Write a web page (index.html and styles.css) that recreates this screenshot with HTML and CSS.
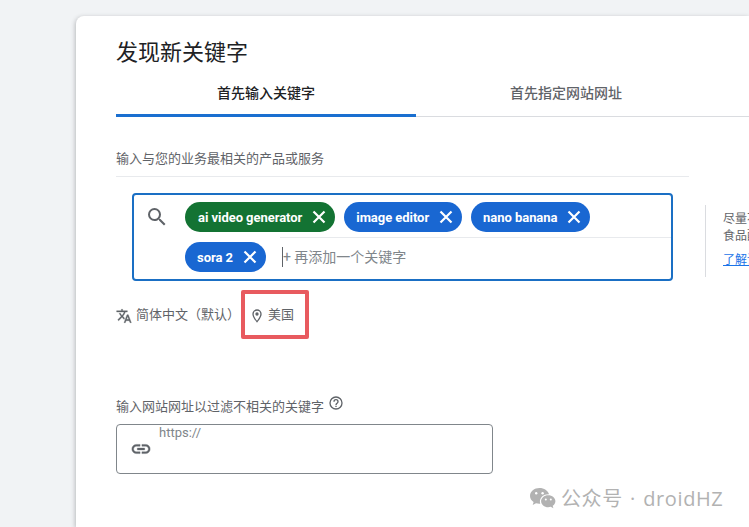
FILE: index.html
```html
<!DOCTYPE html>
<html lang="zh-CN">
<head>
    <meta charset="UTF-8">
    <title>发现新关键字</title>
    <link rel="stylesheet" href="styles.css">
</head>
<body>
    <div class="card">
        <h1 class="title">发现新关键字</h1>
        <div class="tabs">
            <div class="tab active">首先输入关键字</div>
            <div class="tab">首先指定网站网址</div>
        </div>
        <p class="section-label">输入与您的业务最相关的产品或服务</p>
        <div class="keyword-row">
            <div class="keyword-box">
                <svg class="search-icon" viewBox="0 0 24 24"><path d="M15.5 14h-.79l-.28-.27A6.47 6.47 0 0 0 16 9.5 6.5 6.5 0 1 0 9.5 16c1.61 0 3.09-.59 4.23-1.57l.27.28v.79l5 4.99L20.49 19l-4.99-5zm-6 0C7.01 14 5 11.99 5 9.5S7.01 5 9.5 5 14 7.01 14 9.5 11.99 14 9.5 14z"/></svg>
                <div class="chip-area">
                    <div class="chip-line first">
                        <span class="chip green">ai video generator<svg viewBox="0 0 14 14"><path d="M1.500 1.500l11 11M12.500 1.500l-11 11"/></svg></span>
                        <span class="chip">image editor<svg viewBox="0 0 14 14"><path d="M1.500 1.500l11 11M12.500 1.500l-11 11"/></svg></span>
                        <span class="chip">nano banana<svg viewBox="0 0 14 14"><path d="M1.500 1.500l11 11M12.500 1.500l-11 11"/></svg></span>
                    </div>
                    <div class="chip-line">
                        <span class="chip">sora 2<svg viewBox="0 0 14 14"><path d="M1.500 1.500l11 11M12.500 1.500l-11 11"/></svg></span>
                        <span class="add-input">+ 再添加一个关键字</span>
                    </div>
                </div>
            </div>
            <div class="hint">
                <p>尽量不要输入过于宽泛的字词</p>
                <p>食品配送服务等更具体的字词</p>
                <a href="#">了解详情</a>
            </div>
        </div>
        <div class="settings">
            <svg class="lang-icon" viewBox="0 0 24 24"><path d="M12.87 15.07l-2.54-2.51.03-.03A17.52 17.52 0 0 0 14.07 6H17V4h-7V2H8v2H1v1.99h11.17C11.5 7.92 10.44 9.75 9 11.35 8.07 10.32 7.3 9.19 6.69 8h-2c.73 1.63 1.73 3.17 2.98 4.56l-5.09 5.02L4 19l5-5 3.11 3.11.76-2.04zM18.5 10h-2L12 22h2l1.12-3h4.75L21 22h2l-4.5-12zm-2.62 7l1.62-4.33L19.12 17h-3.24z"/></svg>
            <span class="lang-text">简体中文（默认）</span>
            <div class="location-mark">
                <svg class="pin-icon" viewBox="0 0 24 24"><path d="M12 2a7 7 0 0 0-7 7c0 5.25 7 13 7 13s7-7.75 7-13a7 7 0 0 0-7-7zm0 17c-2-2.6-5-6.9-5-10a5 5 0 0 1 10 0c0 3.1-3 7.4-5 10z"/><circle cx="12" cy="9" r="2.5"/></svg>
                <span>美国</span>
            </div>
        </div>
        <div class="url-label">
            <span>输入网站网址以过滤不相关的关键字</span>
            <svg class="help-icon" viewBox="0 0 24 24"><path d="M11 18h2v-2h-2v2zm1-16a10 10 0 1 0 0 20 10 10 0 0 0 0-20zm0 18a8 8 0 1 1 0-16 8 8 0 0 1 0 16zm0-14a4 4 0 0 0-4 4h2a2 2 0 0 1 4 0c0 2-3 1.75-3 5h2c0-2.25 3-2.5 3-5a4 4 0 0 0-4-4z"/></svg>
        </div>
        <div class="url-box">
            <svg class="link-icon" viewBox="0 0 24 24"><path d="M3.9 12c0-1.71 1.39-3.1 3.1-3.1h4V7H7a5 5 0 0 0 0 10h4v-1.9H7c-1.71 0-3.1-1.39-3.1-3.1zM8 13h8v-2H8v2zm9-6h-4v1.9h4c1.71 0 3.1 1.39 3.1 3.1s-1.39 3.1-3.1 3.1h-4V17h4a5 5 0 0 0 0-10z"/></svg>
            <span class="url-placeholder">https://</span>
        </div>
    </div>
    <div class="watermark">
        <svg viewBox="0 0 28 24"><path d="M10.5 2C5.3 2 1 5.5 1 9.9c0 2.5 1.4 4.6 3.6 6.100L3.700 19l3.300-1.700c1.100.3 2.200.5 3.400.5h.9c-.3-.8-.4-1.600-.4-2.400 0-4 3.700-7.200 8.300-7.200h.9C18.900 4.600 15.100 2 10.500 2z"/><path d="M19.200 9.200c-3.900 0-7.100 2.700-7.100 6s3.200 6 7.100 6c.8 0 1.700-.1 2.500-.4l2.700 1.500-.7-2.500c1.700-1.100 2.700-2.800 2.700-4.600 0-3.300-3.200-6-7.200-6z"/><g fill="#fff"><circle cx="7.200" cy="7.300" r="1.200"/><circle cx="13.600" cy="7.300" r="1.200"/><circle cx="16.800" cy="13.600" r="1"/><circle cx="21.800" cy="13.600" r="1"/></g></svg>
        <span>公众号 · droidHZ</span>
    </div>
</body>
</html>
```

FILE: styles.css
```css
*{
    padding: 0;
    margin: 0;
    box-sizing: border-box;
}
html, body{
    height: 100%;
    overflow: hidden;
}
body{
    position: relative;
    font-family: Roboto, 'Noto Sans CJK SC', sans-serif;
    background-color: #f1f3f5;
    padding: 16px 0 0 76px;
}
.card{
    height: 100%;
    padding: 21px 0 0 40px;
    background-color: #fff;
    border-radius: 8px 0 0 0;
    box-shadow: -1px 1px 4px rgba(60, 64, 67, 0.3);
}
.title{
    font-size: 22px;
    font-weight: 400;
    line-height: 32px;
    color: #202124;
}
.tabs{
    display: flex;
    height: 48px;
    border-bottom: 1px solid #dadce0;
}
.tab{
    width: 300px;
    height: 48px;
    line-height: 48px;
    text-align: center;
    font-size: 14px;
    font-weight: 500;
    color: #5f6368;
}
.tab.active{
    color: #202124;
    border-bottom: 3px solid #1a6fd0;
}
.section-label{
    width: 573px;
    margin-top: 31px;
    padding-bottom: 8px;
    height: 29px;
    font-size: 13px;
    line-height: 21px;
    color: #5f6368;
    border-bottom: 1px solid #e8eaed;
}
.keyword-row{
    display: flex;
    align-items: flex-start;
    margin: 16px 0 0 16px;
}
.keyword-box{
    display: flex;
    flex-shrink: 0;
    width: 541px;
    height: 88px;
    border: 2px solid #1a6fc4;
    border-radius: 4px;
}
.search-icon{
    width: 24px;
    height: 24px;
    margin: 10px 0 0 11px;
    fill: #5f6368;
}
.chip-area{
    margin-left: 16px;
    flex: 1;
}
.chip-line{
    display: flex;
    align-items: center;
    gap: 9px;
    height: 38px;
    padding: 4px 0;
}
.chip-line.first{
    position: relative;
    height: 43px;
    padding: 7px 0 6px;
}
.chip-line.first::after{
    content: '';
    position: absolute;
    left: 95px;
    right: 0;
    bottom: 0;
    height: 1px;
    background-color: #e8eaed;
}
.chip{
    display: inline-flex;
    align-items: center;
    height: 30px;
    padding: 0 9px 0 12px;
    border-radius: 15px;
    background-color: #1967d2;
    color: #fff;
    font-size: 13px;
    font-weight: 700;
    letter-spacing: -0.05px;
    white-space: nowrap;
}
.chip.green{
    padding-left: 13px;
    background-color: #137333;
}
.chip svg{
    width: 14px;
    height: 14px;
    margin-left: 10px;
    fill: none;
    stroke: #fff;
    stroke-width: 2.2;
}
.add-input{
    margin-left: 7px;
    border-left: 1px solid #5f6368;
    font-size: 14px;
    line-height: 20px;
    color: #80868b;
}
.hint{
    flex: 1;
    min-width: 0;
    height: 72px;
    margin: 12px 0 0 32px;
    padding: 6px 0 0 17px;
    overflow: hidden;
    border-left: 1px solid #dadce0;
    font-size: 12px;
    line-height: 17px;
    color: #5f6368;
    white-space: nowrap;
}
.hint a{
    display: block;
    margin-top: 7px;
    color: #1a73e8;
}
.settings{
    display: flex;
    align-items: flex-start;
    margin-top: 9px;
    height: 49px;
    font-size: 13px;
    color: #5f6368;
}
.lang-icon{
    width: 16px;
    height: 16px;
    margin-top: 18px;
    fill: #5f6368;
    stroke: #5f6368;
    stroke-width: 0.5;
}
.lang-text{
    margin: 16px 0 0 4px;
    line-height: 18px;
    white-space: nowrap;
}
.location-mark{
    display: flex;
    align-items: flex-start;
    width: 68px;
    height: 49px;
    margin-left: 1px;
    padding: 12px 0 0 4px;
    border: 4px solid #e85a5f;
    border-radius: 2px;
    line-height: 18px;
}
.pin-icon{
    width: 16px;
    height: 16px;
    margin: 2px 3px 0 0;
    fill: #5f6368;
}
.url-label{
    display: flex;
    align-items: center;
    gap: 4px;
    margin-top: 56px;
    height: 20px;
    font-size: 13px;
    color: #5f6368;
}
.help-icon{
    width: 16px;
    height: 16px;
    margin-top: -4px;
    fill: #5f6368;
}
.url-box{
    display: flex;
    width: 377px;
    height: 50px;
    margin-top: 9px;
    border: 1px solid #80868b;
    border-radius: 4px;
}
.link-icon{
    width: 22px;
    height: 22px;
    margin: 13px 0 0 13px;
    fill: #5f6368;
    stroke: #5f6368;
    stroke-width: 0.4;
}
.url-placeholder{
    margin-left: 7px;
    font-size: 13px;
    line-height: 16px;
    color: #80868b;
}
.watermark{
    position: absolute;
    left: 529px;
    top: 483px;
    display: flex;
    align-items: center;
    gap: 4px;
    font-family: 'Open Sans', 'Noto Sans CJK SC', sans-serif;
    font-size: 20px;
    letter-spacing: 0.6px;
    word-spacing: 1.5px;
    color: #b2b2b2;
    white-space: nowrap;
}
.watermark svg{
    width: 28px;
    height: 24px;
    fill: #b2b2b2;
}
```
